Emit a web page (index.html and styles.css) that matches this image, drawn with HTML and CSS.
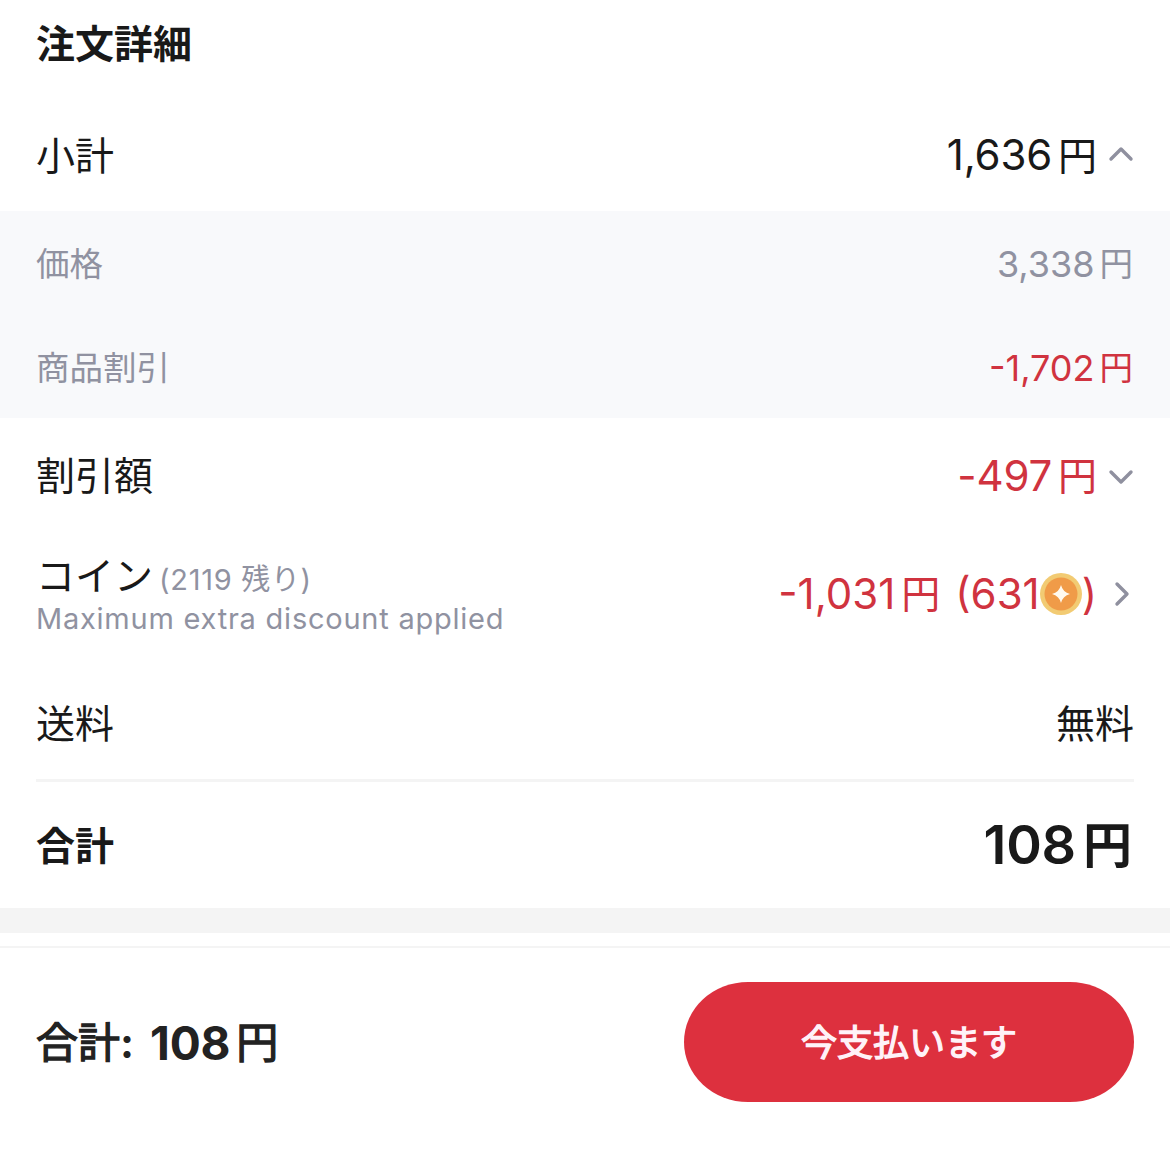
FILE: index.html
```html
<!DOCTYPE html>
<html lang="ja">
  <head>
    <meta charset="UTF-8" />
    <meta name="viewport" content="width=device-width, initial-scale=1.0" />
    <title>注文詳細</title>
    <link rel="stylesheet" href="styles.css">
  </head>
  <body>
    <main class="order">
      <h1 class="title">注文詳細</h1>

      <div class="row subtotal">
        <span class="label">小計</span>
        <span class="amount"><span class="num">1,636</span><span class="yen">円</span></span>
        <svg class="arrow" viewBox="0 0 26 26"><path d="M3 17 L13 7 L23 17" /></svg>
      </div>

      <div class="breakdown">
        <div class="row small">
          <span class="label">価格</span>
          <span class="amount"><span class="num">3,338</span><span class="yen">円</span></span>
        </div>
        <div class="row small">
          <span class="label">商品割引</span>
          <span class="amount red"><span class="num">-1,702</span><span class="yen">円</span></span>
        </div>
      </div>

      <div class="row discount">
        <span class="label">割引額</span>
        <span class="amount red"><span class="num">-497</span><span class="yen">円</span></span>
        <svg class="arrow" viewBox="0 0 26 26"><path d="M3 9 L13 19 L23 9" /></svg>
      </div>

      <div class="row coins">
        <div class="label">
          <div class="coin-label">コイン<span class="balance">(2119 残り)</span></div>
          <div class="note">Maximum extra discount applied</div>
        </div>
        <span class="amount red">
          <span class="num">-1,031</span><span class="yen">円</span>
          <span class="num used">(631</span>
          <svg class="coin" viewBox="0 0 42 42">
            <circle cx="21" cy="21" r="21" fill="#f2cb73" />
            <circle cx="21" cy="21" r="16.5" fill="#f09b48" />
            <path d="M21 12 Q22.8 19.2 30 21 Q22.8 22.8 21 30 Q19.2 22.8 12 21 Q19.2 19.2 21 12Z" fill="#fffaf0" />
          </svg>
          <span class="num">)</span>
        </span>
        <svg class="arrow" viewBox="0 0 26 26"><path d="M9 3 L19 13 L9 23" /></svg>
      </div>

      <div class="row shipping">
        <span class="label">送料</span>
        <span class="amount">無料</span>
      </div>

      <div class="row total">
        <span class="label">合計</span>
        <span class="amount"><span class="num">108</span><span class="yen">円</span></span>
      </div>
    </main>

    <div class="divider"></div>

    <footer class="pay-bar">
      <div class="pay-total">
        <span class="medium">合計</span><span class="colon">:</span><span class="num">108</span><span class="yen medium">円</span>
      </div>
      <button type="button" class="pay-button medium">今支払います</button>
    </footer>
  </body>
</html>
```
FILE: styles.css
```css
* {
  margin: 0;
  padding: 0;
  box-sizing: border-box;
}

body {
  font-family: Inter, "Noto Sans CJK JP", sans-serif;
  background: #fff;
  color: #191919;
  font-size: 39px;
  line-height: 1;
}

.title {
  height: 100px;
  padding: 24px 36px 0;
  font-size: 39px;
  font-weight: 700;
}

.row {
  display: flex;
  align-items: center;
  padding: 0 36px;
}

.label {
  flex: 1;
}

.amount {
  display: flex;
  align-items: center;
}

.num {
  font-size: 42px;
  letter-spacing: -0.2px;
}

.yen {
  margin-left: 6px;
}

.red {
  color: #d0333f;
}

.arrow {
  width: 26px;
  height: 26px;
  margin-left: 11px;
  fill: none;
  stroke: #8f909f;
  stroke-width: 3.4;
  stroke-linecap: round;
  stroke-linejoin: round;
}

.subtotal {
  height: 111px;
  padding-bottom: 1px;
}

.breakdown {
  background: #f8f9fb;
  height: 207px;
  padding-top: 1px;
  color: #9092a1;
}

.small {
  height: 104px;
  padding-top: 2px;
  font-size: 33.5px;
}

.small .num {
  font-size: 36px;
  line-height: 34px;
  padding-bottom: 3px;
  letter-spacing: 0;
}

.small .yen {
  margin-left: 5px;
  margin-right: 1px;
}

.discount {
  height: 116px;
  padding-bottom: 1px;
}

.coins {
  height: 124px;
  padding-bottom: 5px;
}

.coins .label {
  padding-top: 6px;
}

.coins .num {
  letter-spacing: 0;
}

.coin-label {
  display: flex;
  align-items: baseline;
}

.balance {
  margin-left: 6px;
  font-size: 29px;
  letter-spacing: 0.7px;
  color: #9092a1;
}

.note {
  margin-top: 6px;
  font-size: 29px;
  line-height: 36px;
  letter-spacing: 0.76px;
  color: #9092a1;
}

.used {
  margin-left: 15px;
}

.coin {
  width: 42px;
  height: 42px;
}

.shipping {
  height: 124px;
  margin: 0 36px;
  padding: 9px 0 0;
  border-bottom: 3px solid #f4f4f4;
}

.total {
  height: 126px;
  font-weight: 700;
}

.total .amount {
  font-size: 49px;
}

.total .num {
  font-size: 54px;
  font-weight: 600;
}

.total .yen {
  margin-left: 7px;
  margin-right: 2px;
}

.divider {
  height: 25px;
  background: #f4f4f4;
}

.pay-bar {
  display: flex;
  justify-content: space-between;
  align-items: center;
  height: 190px;
  margin-top: 13px;
  padding: 0 36px;
  border-top: 2px solid #f4f4f4;
}

.pay-total {
  display: flex;
  align-items: center;
  padding-top: 2px;
  font-size: 42px;
  font-weight: 700;
  color: #222;
}

.pay-total .num {
  font-size: 46px;
}

/* between regular and bold for the Japanese glyphs */
.medium {
  font-weight: 400;
  -webkit-text-stroke: 1.3px currentColor;
}

.colon {
  margin-right: 16px;
}

.pay-button {
  width: 450px;
  height: 120px;
  padding-bottom: 4px;
  border: none;
  border-radius: 64px / 60px;
  background: #dd303e;
  color: #fff2f8;
  font-family: inherit;
  font-size: 36px;
}
```
